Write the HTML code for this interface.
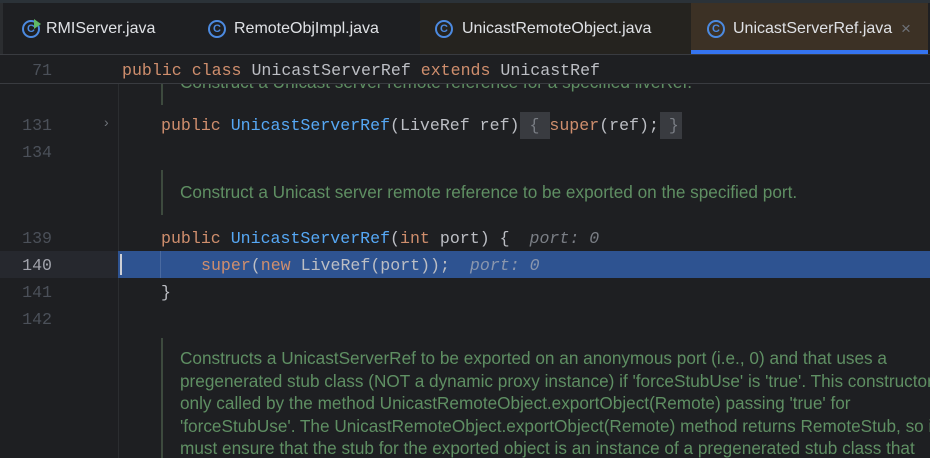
<!DOCTYPE html>
<html style="overflow:hidden;height:458px"><head><meta charset="utf-8"><style>
body{margin:0;width:930px;height:458px;overflow:hidden;background:#1e1f22;font-family:"Liberation Sans",sans-serif;position:relative}
.top{position:absolute;left:0;top:0;width:930px;height:3px;background:#2b3238}
.tabs{position:absolute;left:0;top:3px;width:930px;height:51px;background:#1e1f22;border-bottom:1px solid #393b40}
.tab{position:absolute;top:0;height:51px;line-height:51px;color:#dfe1e5;font-size:16px}
.ic{position:absolute;top:17px;width:14px;height:14px;border:2px solid #4c8ae0;border-radius:50%;}
.ic span{position:absolute;left:0;top:0;width:14px;height:14px;line-height:14px;text-align:center;font-size:11px;color:#4c8ae0;font-weight:bold}
.mono{font-family:"Liberation Mono",monospace;font-size:16.6px}
.ln{position:absolute;left:0;width:52px;text-align:right;color:#4b5059}
.code{position:absolute;left:0;white-space:pre}
.kw{color:#cf8e6d}.fn{color:#56a8f5}.tx{color:#bcbec4}.hint{color:#7a7e85;font-style:italic}
.doc{position:absolute;left:161px;border-left:2px solid #3d4a3e;color:#5f8f63;font-size:17.2px;padding-left:17px;line-height:22.5px;overflow:hidden}
</style></head><body>
<div class="top"></div>
<div class="tabs">
 <div style="position:absolute;left:0;top:0;width:3px;height:51px;background:#2b2d30"></div>
 <div class="tab" style="left:22px"><div class="ic" style="left:0"><span>C</span></div><div style="position:absolute;left:12px;top:16px;width:0;height:0;border-left:7px solid #5fb865;border-top:5px solid transparent;border-bottom:5px solid transparent"></div><span style="position:absolute;left:24px;white-space:nowrap">RMIServer.java</span></div>
 <div class="tab" style="left:208px"><div class="ic" style="left:0"><span>C</span></div><span style="position:absolute;left:26px;white-space:nowrap">RemoteObjImpl.java</span></div>
 <div class="tab" style="left:420px;width:271px;background:#25231f"><div class="ic" style="left:15px"><span>C</span></div><span style="position:absolute;left:42px;white-space:nowrap">UnicastRemoteObject.java</span></div>
 <div class="tab" style="left:691px;width:237px;background:#3c3125"><div class="ic" style="left:16px"><span>C</span></div><span style="position:absolute;left:42px;white-space:nowrap">UnicastServerRef.java</span><span style="position:absolute;left:210px;color:#6f737a;font-size:17px">×</span>
 <div style="position:absolute;left:0;bottom:0;width:237px;height:4px;background:#3574f0"></div></div>
</div>
<div style="position:absolute;left:118px;top:84px;width:1px;height:374px;background:#2b2d30"></div>
<div class="doc" style="top:66px;height:39px;white-space:nowrap"><div style="margin-top:5px">Construct a Unicast server remote reference for a specified liveRef.</div></div>
<div style="position:absolute;left:0;top:55px;width:930px;height:28px;background:#1e1f22;border-bottom:1px solid #393b40"></div>
<div class="mono ln" style="top:61px">71</div>
<div class="mono code" style="left:122px;top:61px"><span class="kw">public class </span><span class="tx">UnicastServerRef </span><span class="kw">extends </span><span class="tx">UnicastRef</span></div>
<div class="mono ln" style="top:116px">131</div>
<div style="position:absolute;left:104px;top:114px;color:#6f737a;font-size:14px">›</div>
<div style="position:absolute;left:520px;top:112px;width:30px;height:27px;background:#393b40"></div>
<div style="position:absolute;left:660px;top:112px;width:22px;height:27px;background:#393b40"></div>
<div class="mono code" style="left:161px;top:116px"><span class="kw">public </span><span class="fn">UnicastServerRef</span><span class="tx">(LiveRef ref) </span><span style="color:#7a7e85">{ </span><span class="kw">super</span><span class="tx">(ref); </span><span style="color:#7a7e85">}</span></div>
<div class="mono ln" style="top:143px">134</div>
<div class="doc" style="top:170px;height:45px;white-space:nowrap"><div style="margin-top:11px">Construct a Unicast server remote reference to be exported on the specified port.</div></div>
<div class="mono ln" style="top:229px">139</div>
<div class="mono code" style="left:161px;top:229px"><span class="kw">public </span><span class="fn">UnicastServerRef</span><span class="tx">(</span><span class="kw">int </span><span class="tx">port) {  </span><span class="hint">port: 0</span></div>
<div style="position:absolute;left:0;top:251px;width:118px;height:27px;background:#26282e"></div>
<div style="position:absolute;left:118px;top:251px;width:812px;height:27px;background:#2e5391"></div>
<div style="position:absolute;left:120px;top:254px;width:2px;height:21px;background:#ced0d6"></div>
<div style="position:absolute;left:160px;top:251px;width:1px;height:27px;background:#4a6aa0"></div>
<div class="mono ln" style="top:256px;color:#a1a3ab">140</div>
<div class="mono code" style="left:201px;top:256px"><span class="kw">super</span><span class="tx">(</span><span class="kw">new </span><span class="tx">LiveRef(port));  </span><span class="hint" style="color:#8a96ad">port: 0</span></div>
<div class="mono ln" style="top:283px">141</div>
<div class="mono code tx" style="left:161px;top:283px">}</div>
<div class="mono ln" style="top:310px">142</div>
<div class="doc" style="top:338px;height:120px;white-space:nowrap"><div style="margin-top:9px">Constructs a UnicastServerRef to be exported on an anonymous port (i.e., 0) and that uses a<br>pregenerated stub class (NOT a dynamic proxy instance) if 'forceStubUse' is 'true'. This constructor is<br>only called by the method UnicastRemoteObject.exportObject(Remote) passing 'true' for<br>'forceStubUse'. The UnicastRemoteObject.exportObject(Remote) method returns RemoteStub, so it<br>must ensure that the stub for the exported object is an instance of a pregenerated stub class that</div></div>
</body></html>
